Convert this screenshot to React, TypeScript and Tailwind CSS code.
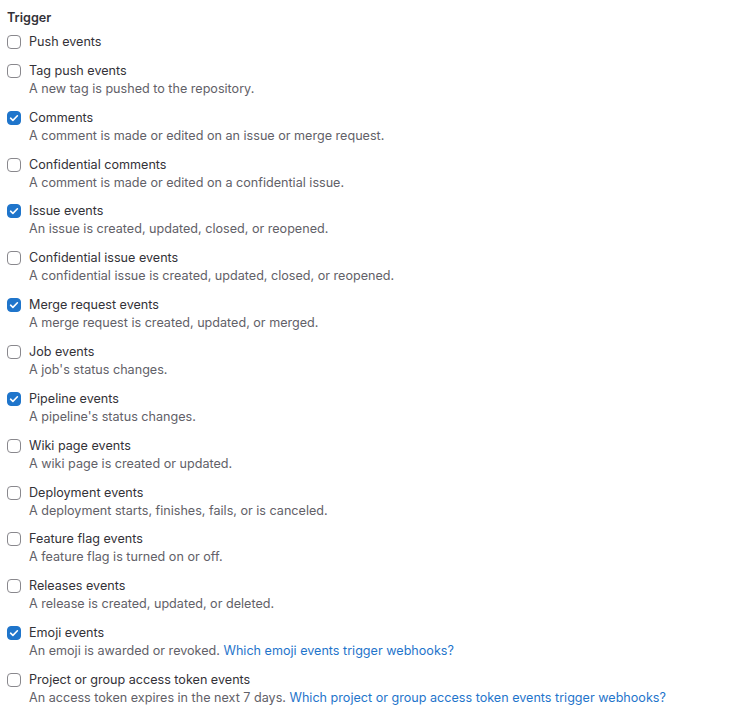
import React, { useState } from "react";

type Trigger = {
    id: string;
    label: string;
    description?: string;
    link?: string;
    checked: boolean;
};

const TRIGGERS: Trigger[] = [
    { id: "push", label: "Push events", checked: false },
    { id: "tag", label: "Tag push events", description: "A new tag is pushed to the repository.", checked: false },
    { id: "note", label: "Comments", description: "A comment is made or edited on an issue or merge request.", checked: true },
    { id: "cnote", label: "Confidential comments", description: "A comment is made or edited on a confidential issue.", checked: false },
    { id: "issue", label: "Issue events", description: "An issue is created, updated, closed, or reopened.", checked: true },
    { id: "cissue", label: "Confidential issue events", description: "A confidential issue is created, updated, closed, or reopened.", checked: false },
    { id: "mr", label: "Merge request events", description: "A merge request is created, updated, or merged.", checked: true },
    { id: "job", label: "Job events", description: "A job's status changes.", checked: false },
    { id: "pipeline", label: "Pipeline events", description: "A pipeline's status changes.", checked: true },
    { id: "wiki", label: "Wiki page events", description: "A wiki page is created or updated.", checked: false },
    { id: "deploy", label: "Deployment events", description: "A deployment starts, finishes, fails, or is canceled.", checked: false },
    { id: "flag", label: "Feature flag events", description: "A feature flag is turned on or off.", checked: false },
    { id: "release", label: "Releases events", description: "A release is created, updated, or deleted.", checked: false },
    {
        id: "emoji",
        label: "Emoji events",
        description: "An emoji is awarded or revoked.",
        link: "Which emoji events trigger webhooks?",
        checked: true,
    },
    {
        id: "token",
        label: "Project or group access token events",
        description: "An access token expires in the next 7 days.",
        link: "Which project or group access token events trigger webhooks?",
        checked: false,
    },
];

const Checkbox: React.FC<{ checked: boolean; onToggle: () => void }> = ({ checked, onToggle }) => (
    <button
        type="button"
        onClick={onToggle}
        className={`mt-[2px] flex h-[14px] w-[14px] shrink-0 items-center justify-center rounded-[4px] border ${
            checked ? "border-[#1f75cb] bg-[#1f75cb]" : "border-[#89888d] bg-white"
        }`}
    >
        {checked && (
            <svg width="12" height="12" viewBox="0 0 12 12" fill="none">
                <path d="M2.6 6.2 L4.9 8.4 L9.4 3.8" stroke="white" strokeWidth="1.6" strokeLinecap="round" strokeLinejoin="round" />
            </svg>
        )}
    </button>
);

export default function App() {
    const [triggers, setTriggers] = useState(TRIGGERS);

    const toggle = (id: string) =>
        setTriggers((prev) => prev.map((t) => (t.id === id ? { ...t, checked: !t.checked } : t)));

    return (
        <div className="min-h-[718px] bg-white pl-[7px] pt-[9px] font-['Inter',sans-serif] text-[12.6px] leading-[18px] text-[#333238]">
            <div className="mb-[6px] font-semibold">Trigger</div>
            <div className="flex flex-col gap-[10.86px]">
                {triggers.map((t) => (
                    <div key={t.id} className="flex gap-[8px]">
                        <Checkbox checked={t.checked} onToggle={() => toggle(t.id)} />
                        <div className="flex flex-col">
                            <label className="cursor-pointer" onClick={() => toggle(t.id)}>
                                {t.label}
                            </label>
                            {t.description && (
                                <span className="text-[#626168]">
                                    {t.description}
                                    {t.link && (
                                        <>
                                            {" "}
                                            <a href="#" className="text-[#1f75cb]">
                                                {t.link}
                                            </a>
                                        </>
                                    )}
                                </span>
                            )}
                        </div>
                    </div>
                ))}
            </div>
        </div>
    );
}
